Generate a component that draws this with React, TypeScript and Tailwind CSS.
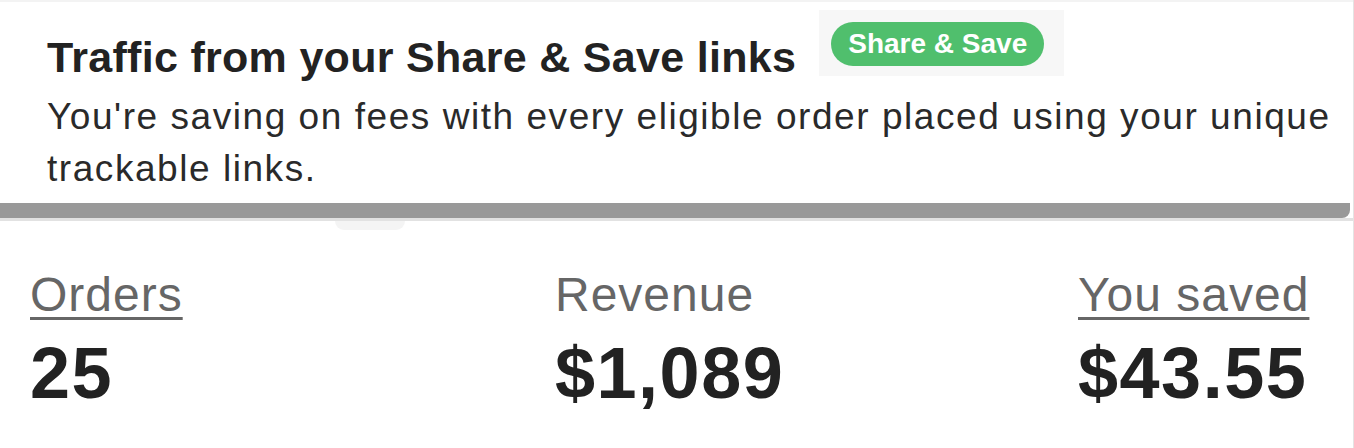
import React from "react";

const font = { fontFamily: '"Liberation Sans", Arial, sans-serif' };

interface StatProps {
  label: string;
  value: string;
  underline?: boolean;
  className?: string;
}

const Stat = ({ label, value, underline, className }: StatProps) => (
  <div className={className}>
    <div
      className={
        "text-[48px] leading-[56px] tracking-[1px] text-[#666666] " +
        (underline ? "underline decoration-[3px] underline-offset-[6px]" : "")
      }
    >
      {label}
    </div>
    <div className="mt-[14px] text-[72px] leading-[72px] tracking-[1.5px] font-bold text-[#222222]">
      {value}
    </div>
  </div>
);

export default function App() {
  return (
    <div
      className="relative h-[448px] w-full overflow-hidden bg-white border-r border-[#e4e4e4]"
      style={font}
    >
      <div className="border-t-2 border-[#f3f3f3] bg-white pt-[8px] pl-[47px]">
        <div className="flex items-start">
          <h2 className="mt-[21px] text-[43px] leading-[52px] tracking-[0.3px] font-bold text-[#222222]">
            Traffic from your Share &amp; Save links
          </h2>
          <div className="ml-[23px] h-[66px] bg-[#f7f7f7] pl-[12px] pr-[20px] pt-[12px]">
            <span className="flex h-[44px] items-center rounded-full bg-[#50bf6d] px-[17px] text-[28px] font-bold text-white">
              Share &amp; Save
            </span>
          </div>
        </div>
        <p className="mt-[8px] pr-[4px] text-[37px] leading-[52px] tracking-[1.55px] text-[#2a2a2a]">
          You're saving on fees with every eligible order placed using your
          unique trackable links.
        </p>
      </div>

      <div className="mt-[8px] mr-[3px] h-[15px] rounded-br-[8px] bg-[#999999]" />
      <div className="h-[3px] bg-[#e2e2e2]" />
      <div className="absolute left-[335px] top-[221px] h-[9px] w-[70px] rounded-b-full bg-[#f4f4f4]" />

      <div className="mt-[46px] flex pl-[30px]">
        <Stat className="w-[525px]" label="Orders" value="25" underline />
        <Stat className="w-[523px]" label="Revenue" value="$1,089" />
        <Stat label="You saved" value="$43.55" underline />
      </div>
    </div>
  );
}
